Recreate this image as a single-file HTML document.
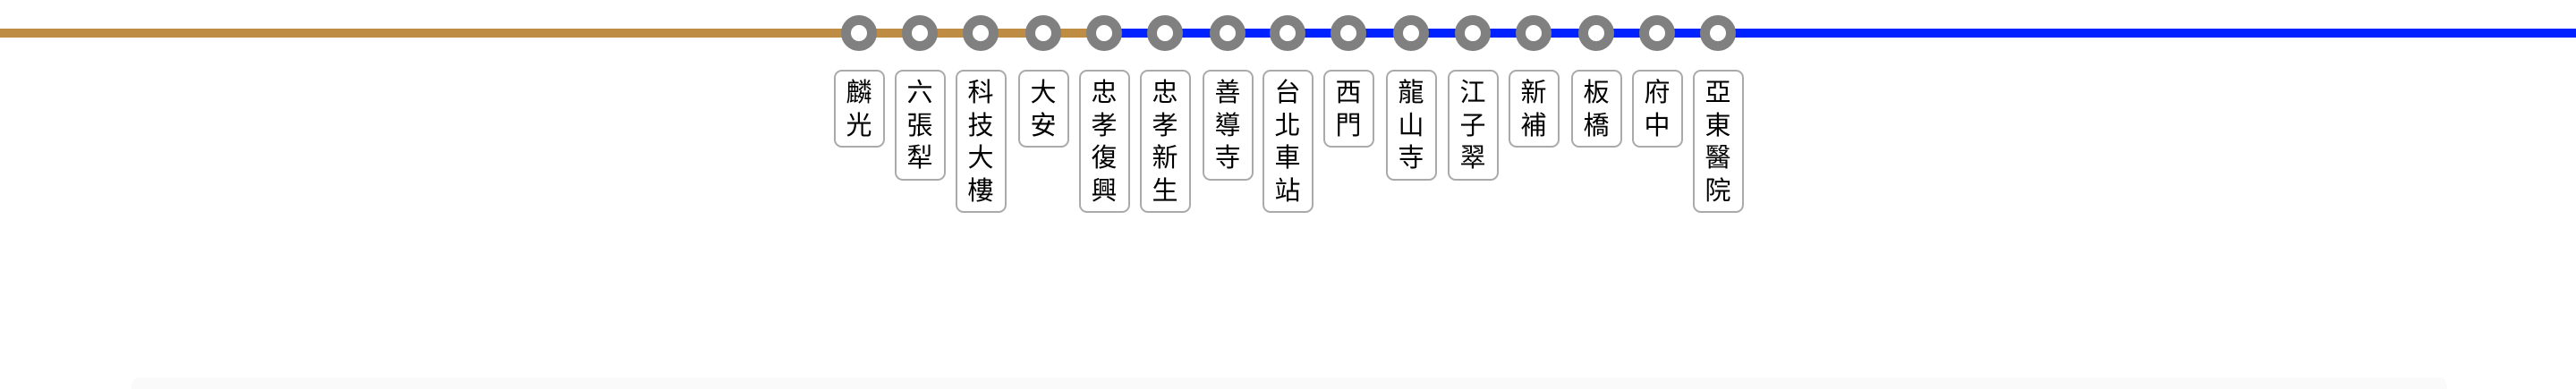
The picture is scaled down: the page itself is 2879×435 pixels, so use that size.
<!DOCTYPE html>
<html><head><meta charset="utf-8"><style>
html,body{margin:0;padding:0;background:#fff;width:2879px;height:435px;overflow:hidden;position:relative}
.line{position:absolute;top:32px;height:10px}
.st{position:absolute;top:17px;width:40px;height:40px;box-sizing:border-box;border:11px solid #808080;border-radius:50%;background:#fff;margin-left:-20px}
.lb{position:absolute;top:78px;width:57px;margin-left:-28.5px;box-sizing:border-box;border:2px solid #aaa;border-radius:9px;background:#fff;font-family:"Liberation Sans","Noto Sans CJK TC",sans-serif;font-size:29px;line-height:36.5px;text-align:center;padding:6px 0 4px;color:#000}
.band{position:absolute;left:147px;width:2588px;top:422px;height:13px;background:#fafafa;border-radius:10px 10px 0 0}
</style></head><body>
<div class="line" style="left:0;width:1234px;background:#be8c42"></div>
<div class="line" style="left:1234px;right:0;background:#0022ff"></div>
<div class="band"></div>

<div class="st" style="left:960px"></div><div class="lb" style="left:960px">麟<br>光</div>
<div class="st" style="left:1028px"></div><div class="lb" style="left:1028px">六<br>張<br>犁</div>
<div class="st" style="left:1096px"></div><div class="lb" style="left:1096px">科<br>技<br>大<br>樓</div>
<div class="st" style="left:1166px"></div><div class="lb" style="left:1166px">大<br>安</div>
<div class="st" style="left:1234px"></div><div class="lb" style="left:1234px">忠<br>孝<br>復<br>興</div>
<div class="st" style="left:1302px"></div><div class="lb" style="left:1302px">忠<br>孝<br>新<br>生</div>
<div class="st" style="left:1372px"></div><div class="lb" style="left:1372px">善<br>導<br>寺</div>
<div class="st" style="left:1439px"></div><div class="lb" style="left:1439px">台<br>北<br>車<br>站</div>
<div class="st" style="left:1507px"></div><div class="lb" style="left:1507px">西<br>門</div>
<div class="st" style="left:1577px"></div><div class="lb" style="left:1577px">龍<br>山<br>寺</div>
<div class="st" style="left:1646px"></div><div class="lb" style="left:1646px">江<br>子<br>翠</div>
<div class="st" style="left:1714px"></div><div class="lb" style="left:1714px">新<br>補</div>
<div class="st" style="left:1784px"></div><div class="lb" style="left:1784px">板<br>橋</div>
<div class="st" style="left:1852px"></div><div class="lb" style="left:1852px">府<br>中</div>
<div class="st" style="left:1920px"></div><div class="lb" style="left:1920px">亞<br>東<br>醫<br>院</div>
</body></html>
